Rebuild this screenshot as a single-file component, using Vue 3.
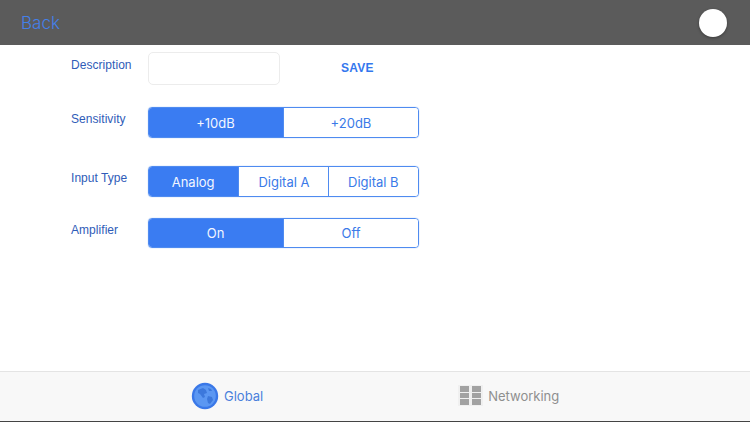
<template>
  <div class="screen">
    <header class="topbar">
      <span class="back">Back</span>
      <span class="knob"></span>
    </header>

    <main class="form">
      <div class="row row-desc">
        <label class="label">Description</label>
        <div class="input"></div>
        <span class="save">SAVE</span>
      </div>
      <div v-for="group in groups" :key="group.name" class="row" :class="group.cls">
        <label class="label">{{ group.name }}</label>
        <div class="segments">
          <div
            v-for="(opt, i) in group.options"
            :key="opt"
            class="segment"
            :class="{ active: i === 0 }"
          >{{ opt }}</div>
        </div>
      </div>
    </main>

    <footer class="tabbar">
      <div class="tab tab-global">
        <svg class="globe" width="28" height="28" viewBox="0 0 28 28">
          <circle cx="14" cy="14" r="13.2" fill="#3a78e8" />
          <circle cx="14" cy="14" r="10.8" fill="#5b97f2" />
          <path d="M7 8l5-2 3 2 1 3-3 1 1 3-2 1-3-4-2-1z" fill="#3c78dc" />
          <path d="M17 14l4 1 1 3-3 4-2-1-1-4z" fill="#3c78dc" />
          <path d="M17 6l3 1 1 2-3 0z" fill="#3c78dc" />
        </svg>
        <span>Global</span>
      </div>
      <div class="tab tab-net">
        <div class="blocks">
          <div v-for="col in 2" :key="col" class="block-col">
            <i v-for="n in 3" :key="n"></i>
          </div>
        </div>
        <span>Networking</span>
      </div>
    </footer>
  </div>
</template>

<script setup>
const groups = [
  { name: 'Sensitivity', cls: 'row-sens', options: ['+10dB', '+20dB'] },
  { name: 'Input Type', cls: 'row-input', options: ['Analog', 'Digital A', 'Digital B'] },
  { name: 'Amplifier', cls: 'row-amp', options: ['On', 'Off'] }
]
</script>

<style>
html, body {
  margin: 0;
  background: #fff;
}
</style>

<style scoped>
.screen {
  width: 750px;
  height: 422px;
  display: flex;
  flex-direction: column;
  overflow: hidden;
  background: #fff;
  font-family: Inter, "Liberation Sans", sans-serif;
}

.topbar {
  height: 45px;
  flex: none;
  display: flex;
  align-items: center;
  justify-content: space-between;
  padding: 0 23px 0 21px;
  background: #5b5b5b;
}

.back {
  font-size: 17px;
  font-weight: 300;
  color: #4480ea;
}

.knob {
  width: 28px;
  height: 28px;
  border-radius: 50%;
  background: #fff;
  box-shadow: 0 1px 3px rgba(0, 0, 0, 0.35);
}

.form {
  flex: 1;
  padding: 7px 0 0 71px;
}

.row {
  display: flex;
  align-items: flex-start;
}

.row-desc {
  height: 32px;
}

.row-sens {
  margin-top: 23px;
}

.row-input {
  margin-top: 28px;
}

.row-amp {
  margin-top: 21px;
}

.label {
  width: 77px;
  flex: none;
  font-family: "Liberation Sans", sans-serif;
  font-size: 12px;
  letter-spacing: 0.05px;
  line-height: 16px;
  margin-top: 4px;
  color: #2f5cb8;
}

.row-desc .label {
  margin-top: 5px;
}

.input {
  width: 130px;
  height: 31px;
  border: 1px solid #ececec;
  border-radius: 5px;
  background: #fff;
}

.save {
  margin: 8px 0 0 61px;
  font-family: "Liberation Sans", sans-serif;
  font-size: 12px;
  font-weight: 700;
  line-height: 16px;
  color: #3377ee;
  letter-spacing: 0.2px;
}

.segments {
  width: 271px;
  height: 31px;
  box-sizing: border-box;
  display: flex;
  border: 1px solid #4f8bf0;
  border-radius: 4px;
  overflow: hidden;
  box-shadow: 0 0 1px #6a9bf2;
}

.row-amp .segments {
  height: 30px;
}

.segment {
  flex: 1 1 60px;
  box-sizing: border-box;
  display: flex;
  align-items: center;
  justify-content: center;
  margin-left: -1px;
  font-size: 13px;
  color: #3a7ae8;
  background: #fff;
  border-left: 1px solid #4f8bf0;
}

.segment:first-child {
  margin-left: 0;
  border-left: none;
}

.segment.active {
  padding-right: 2px;
  background: #3a7cf2;
  color: #f2f6ff;
}

.tabbar {
  height: 47px;
  padding-bottom: 2px;
  flex: none;
  display: flex;
  border-top: 1px solid #e4e4e4;
  border-bottom: 1px solid #444;
  background: #f8f8f8;
  font-size: 13px;
}

.tab {
  display: flex;
  align-items: center;
  gap: 5px;
}

.tab-global {
  margin-left: 191px;
  color: #4a80dc;
}

.tab-net {
  margin-left: 195px;
  gap: 5px;
  color: #8f8f8f;
}

.globe {
  display: block;
}

.blocks {
  display: flex;
  gap: 3px;
  padding: 1px 2px;
  background: #f0f0f0;
}

.block-col {
  display: flex;
  flex-direction: column;
  gap: 1px;
}

.block-col i {
  display: block;
  width: 9px;
  height: 5.5px;
  background: #a2a2a2;
}
</style>
